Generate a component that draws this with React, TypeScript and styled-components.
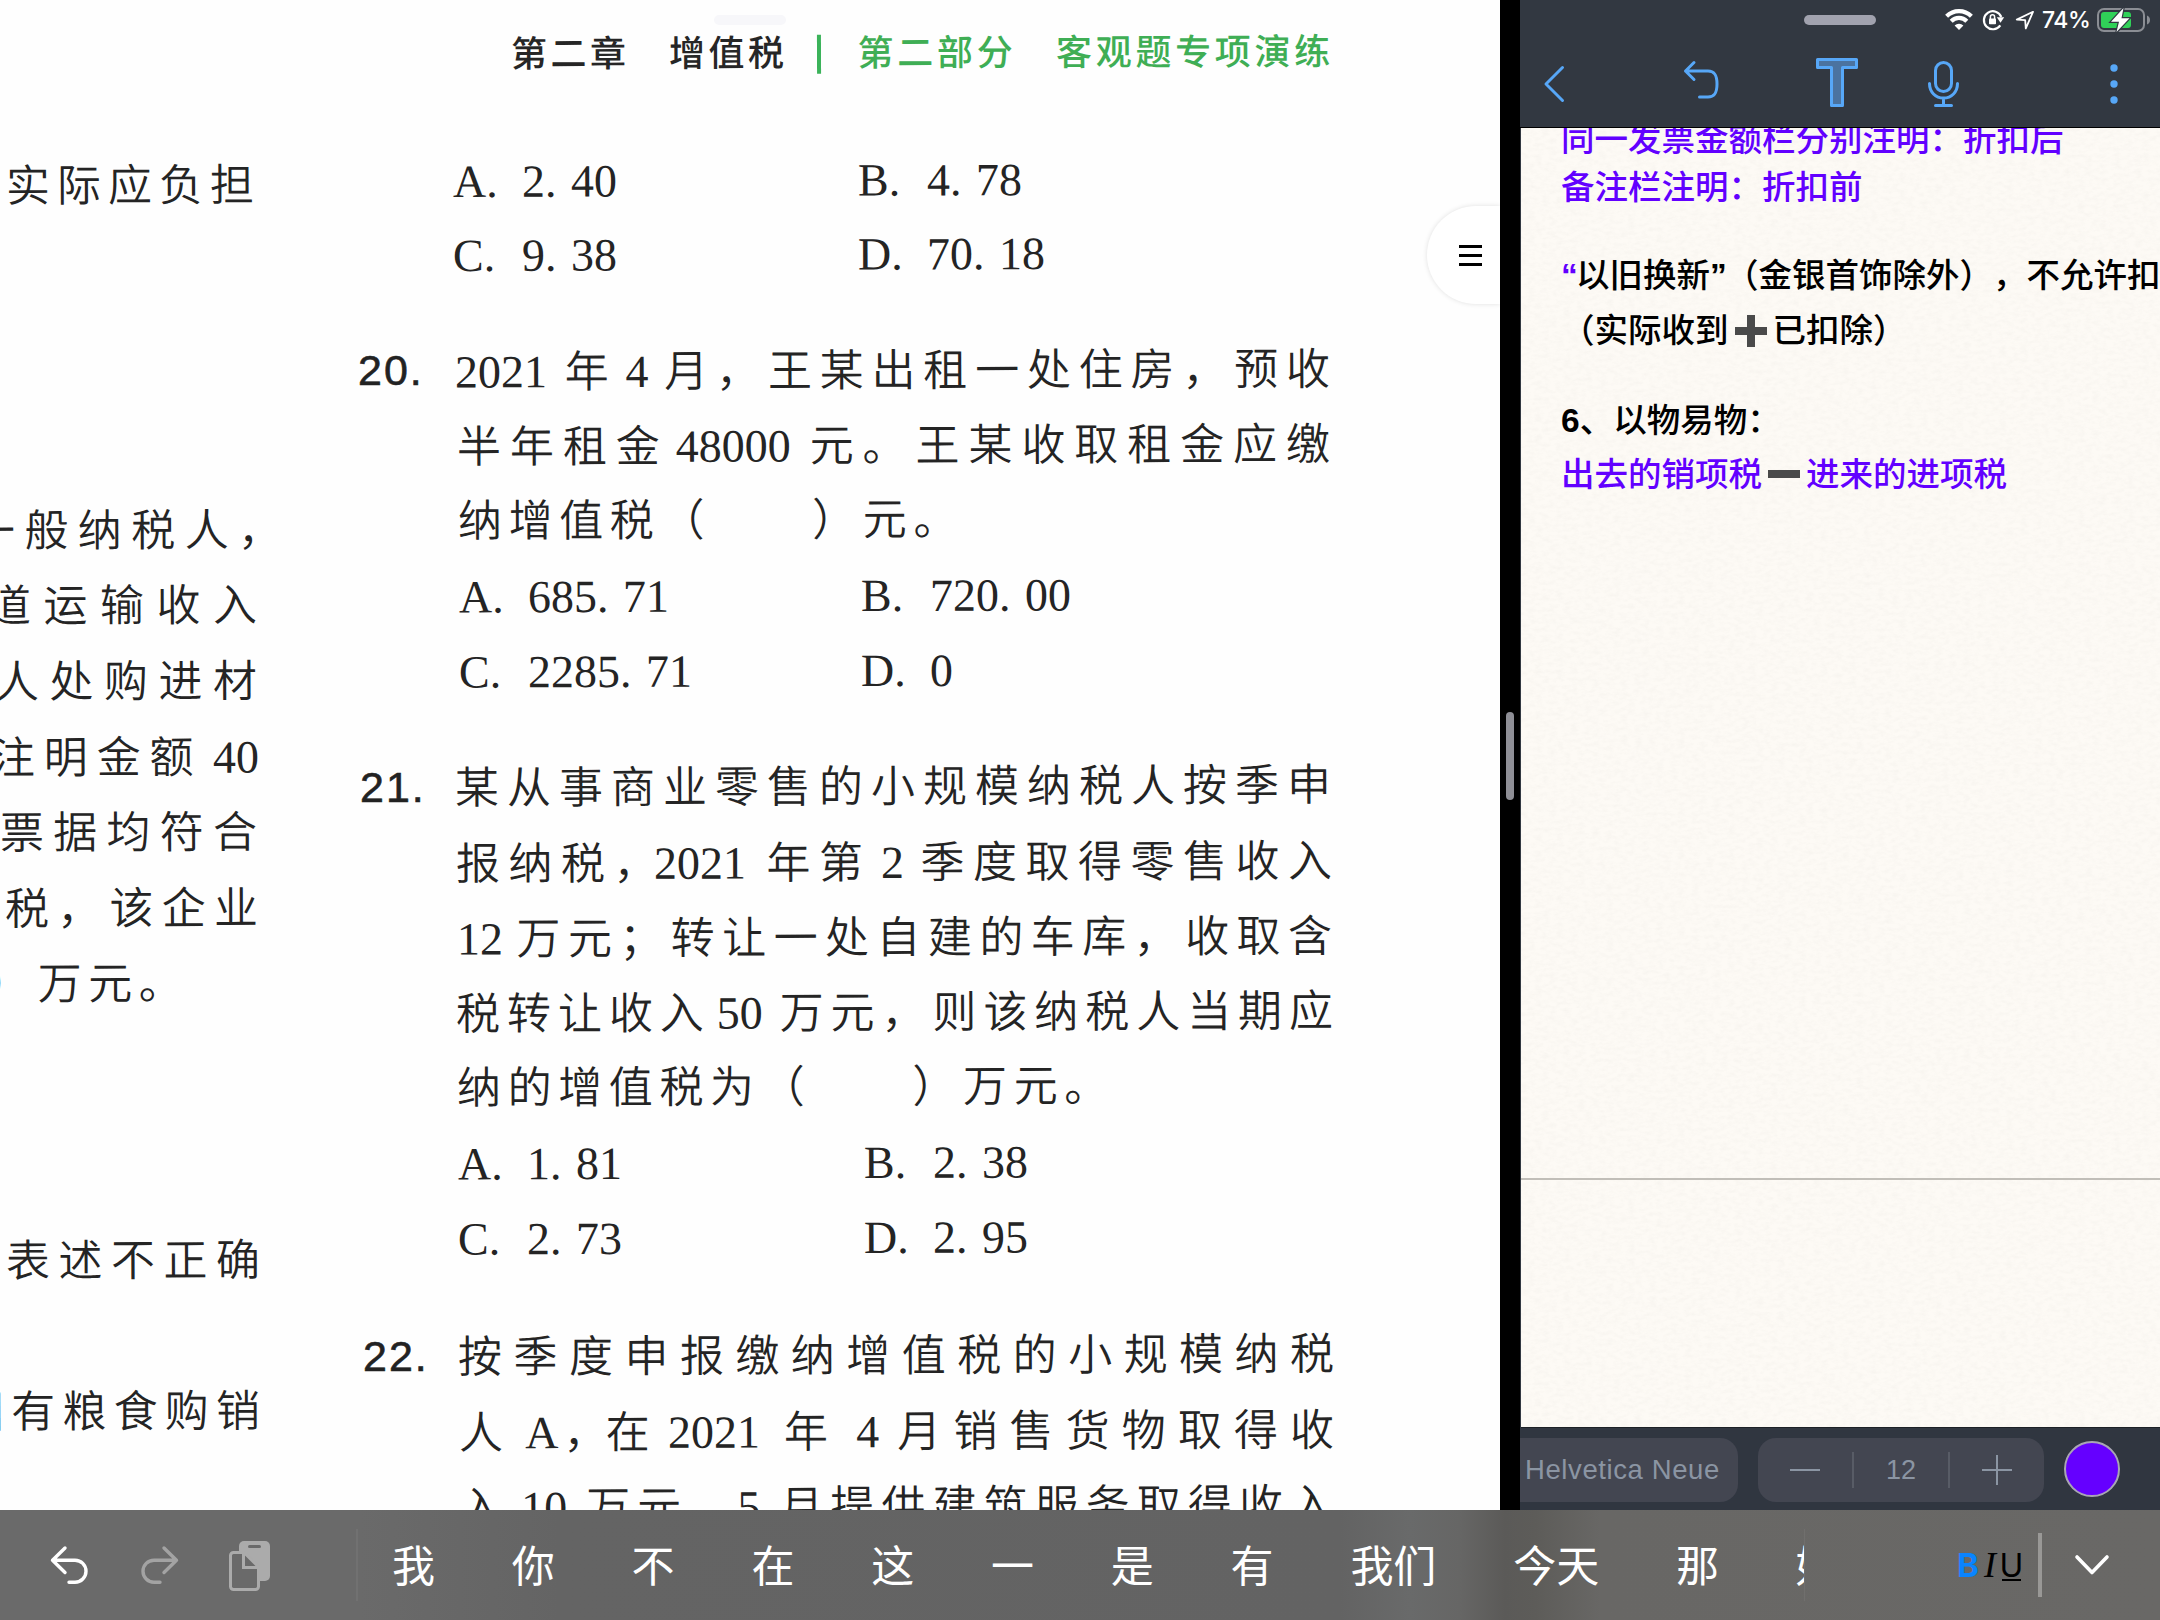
import React from "react";
import styled, { createGlobalStyle, css } from "styled-components";

const GlobalStyle = createGlobalStyle`
  html, body { margin: 0; padding: 0; background: #000; }
  body { overflow: hidden; text-spacing-trim: space-all; }
  * { box-sizing: border-box; }
`;

const serif = `"Liberation Serif", "Noto Sans CJK SC", serif`;
const sans = `"Liberation Sans", "Noto Sans CJK SC", sans-serif`;

const Screen = styled.div`
  width: 2160px;
  height: 1620px;
  display: flex;
  flex-direction: column;
  overflow: hidden;
`;

const Split = styled.div`
  display: flex;
  height: 1510px;
  flex: none;
`;

/* ---------- scanned book page ---------- */

const Book = styled.main`
  position: relative;
  width: 1500px;
  height: 1510px;
  overflow: hidden;
  background: #fefefe;
  color: #242424;
  font-family: ${serif};
`;

const Grabber = styled.div<{ $left: number; $color: string }>`
  position: absolute;
  top: 15px;
  left: ${(p) => p.$left}px;
  width: 72px;
  height: 10px;
  border-radius: 5px;
  background: ${(p) => p.$color};
`;

const RunningHead = styled.header`
  display: flex;
  align-items: center;
  height: 106px;
  padding: 2px 0 0 511px;
  font: 500 36px/50px ${sans};
  white-space: nowrap;
  transform: rotate(-0.15deg);
`;

const Chapter = styled.span`
  letter-spacing: 3.5px;
  color: #262626;
`;

const HeadRule = styled.i`
  width: 4px;
  height: 39px;
  margin: 0 37px 0 29px;
  background: #3bb35a;
`;

const Part = styled.span`
  letter-spacing: 3.7px;
  color: #3fae55;
`;

const Columns = styled.div`
  display: flex;
`;

const PrevColumn = styled.section`
  width: 358px;
  flex: none;
  padding-top: 43px;
  line-height: 75.6px;
`;

const Column = styled.section`
  padding-top: 38px;
  line-height: 75px;
`;

const Block = styled.div<{ $gap?: number }>`
  display: flex;
  margin-top: ${(p) => p.$gap ?? 0}px;
`;

const QuestionNumber = styled.span<{ $indent?: number }>`
  width: 96px;
  flex: none;
  padding-left: ${(p) => p.$indent ?? 0}px;
  font-family: ${sans};
  font-size: 43px;
  letter-spacing: 2px;
  color: #222;
  -webkit-text-stroke: 0.6px #222;
`;

const Lines = styled.div`
  display: flex;
  flex-direction: column;
`;

const Line = styled.p<{ $indent: number; $width?: number }>`
  margin: 0 0 0 ${(p) => p.$indent}px;
  height: 1lh;
  font-size: 44px;
  font-weight: 350;
  white-space: nowrap;
  word-spacing: -9px;
  transform: rotate(-0.2deg);
  ${(p) =>
    p.$width
      ? css`
          width: ${p.$width}px;
          text-align: justify;
          text-align-last: justify;
        `
      : css`
          letter-spacing: 6.6px;
        `}
`;

const Num = styled.span<{ $l?: number; $r?: number }>`
  margin: 0 ${(p) => p.$r ?? 6}px 0 ${(p) => p.$l ?? -1}px;
  font-size: 46px;
  font-weight: 400;
`;

const OptionRow = styled.div<{ $indent: number; $split: number }>`
  display: grid;
  grid-template-columns: ${(p) => p.$split}px auto;
  margin-left: ${(p) => p.$indent}px;
  transform: rotate(-0.2deg);
`;

const OptionCell = styled.div`
  display: grid;
  grid-template-columns: 69px auto;
  justify-content: start;
  height: 1lh;
  font-size: 46px;
  word-spacing: 3px;
  white-space: nowrap;
`;

const OptionList = styled.div<{ $pitch?: number }>`
  line-height: ${(p) => p.$pitch ?? 75}px;
`;

const MenuTab = styled.button`
  position: absolute;
  top: 206px;
  right: 0;
  width: 73px;
  height: 98px;
  padding: 0 18px 0 0;
  border: 0;
  border-radius: 49px 0 0 49px;
  background: #fff;
  box-shadow: 0 0 5px rgba(0, 0, 0, 0.12);
  display: flex;
  flex-direction: column;
  align-items: flex-end;
  justify-content: center;
  gap: 6px;
`;

const MenuBar = styled.i`
  width: 23px;
  height: 3px;
  background: #000;
`;

/* ---------- split divider ---------- */

const Divider = styled.div`
  width: 20px;
  flex: none;
  background: #000;
  display: flex;
  justify-content: center;
  padding-top: 712px;
`;

const DividerHandle = styled.i`
  width: 8px;
  height: 88px;
  border-radius: 4px;
  background: #8e8e95;
`;

/* ---------- notes app ---------- */

const Notes = styled.aside`
  position: relative;
  width: 640px;
  display: flex;
  flex-direction: column;
  background: #323841;
`;

const StatusBar = styled.div`
  display: flex;
  align-items: center;
  justify-content: flex-end;
  height: 40px;
  padding-right: 9px;
  color: #fff;
  font: 400 24px/40px Inter, ${sans};
`;

const Percent = styled.span`
  width: 50px;
  margin: 0 5px 0 7px;
  letter-spacing: -0.5px;
  font-size: 23px;
  font-weight: 500;
`;

const Toolbar = styled.nav`
  display: flex;
  align-items: center;
  height: 88px;
  padding-left: 24px;
  border-bottom: 1px solid #000;
  color: #57a7f7;
`;

const ToolIcon = styled.svg<{ $ml?: number; $mt?: number }>`
  display: block;
  flex: none;
  margin-left: ${(p) => p.$ml ?? 0}px;
  margin-top: ${(p) => p.$mt ?? 0}px;
  overflow: visible;
`;

const Paper = styled.article`
  position: relative;
  height: 1300px;
  margin-left: 1px;
  overflow: hidden;
  background: #fdfaf5;
  border-bottom: 1px solid #1d2126;
`;

const Grain = styled.svg`
  position: absolute;
  inset: 0;
  width: 100%;
  height: 100%;
`;

const NoteBody = styled.div`
  position: relative;
  display: flow-root;
  height: 1052px;
  padding-left: 40px;
  border-bottom: 2px solid #c1beb8;
  font: 500 33.5px/48px ${sans};
  color: #000;
`;

const NoteLine = styled.p<{ $gap: number; $accent?: boolean }>`
  display: flex;
  align-items: center;
  height: 48px;
  margin: ${(p) => p.$gap}px 0 0;
  white-space: nowrap;
  color: ${(p) => (p.$accent ? "#6200ff" : "#000")};
`;

const Quote = styled.span<{ $accent?: boolean }>`
  width: 15px;
  font-weight: 700;
  color: ${(p) => (p.$accent ? "#6200ff" : "inherit")};
`;

const Bold = styled.b`
  font-weight: 700;
`;

const OperatorIcon = styled.svg`
  width: 32px;
  height: 32px;
  margin: 0 6px;
`;

const FormatBar = styled.div`
  display: flex;
  align-items: center;
  height: 82px;
  padding-top: 1px;
  background: #303640;
  color: #8b95a3;
  font: 400 27px/64px ${sans};
`;

const FontName = styled.div`
  width: 218px;
  height: 64px;
  padding-left: 5px;
  border-radius: 0 18px 18px 0;
  background: #434651;
  white-space: nowrap;
  letter-spacing: 0.6px;
  font-size: 27.5px;
`;

const Stepper = styled.div`
  display: grid;
  grid-template-columns: 94px 2px 94px 2px 94px;
  place-items: center;
  width: 286px;
  height: 64px;
  margin-left: 20px;
  border-radius: 18px;
  background: #434651;
`;

const StepRule = styled.i`
  width: 2px;
  height: 36px;
  background: #585c66;
`;

const Swatch = styled.i`
  width: 56px;
  height: 56px;
  margin: -2px 0 0 20px;
  border: 2px solid #a9a5b5;
  border-radius: 50%;
  background: #6500ff;
`;

/* ---------- keyboard suggestion bar ---------- */

const KeyboardBar = styled.footer`
  display: flex;
  align-items: center;
  height: 110px;
  flex: none;
  background: linear-gradient(
    90deg,
    #6a6a6a 0,
    #6a6a6a 360px,
    #646464 560px,
    #636363 1340px,
    #696a6a 1410px,
    #666665 1460px,
    #5b5a58 1505px,
    #5d5c59 1535px,
    #686765 1600px,
    #696866 2160px
  );
`;

const EditTools = styled.div`
  display: flex;
  align-items: center;
  width: 358px;
  height: 72px;
  flex: none;
  padding-left: 50px;
  border-right: 2px solid #717171;
`;

const Candidates = styled.div`
  display: flex;
  align-items: center;
  width: 1447px;
  height: 72px;
  flex: none;
  padding-left: 34px;
  overflow: hidden;
  border-right: 1px solid #706f6d;
  color: #fff;
  font: 400 43px/69px "Noto Sans CJK SC", sans-serif;
  white-space: nowrap;
`;

const Candidate = styled.span`
  flex: none;
  height: 72px;
  padding-right: 76.8px;
`;

const TextStyles = styled.div`
  display: flex;
  align-items: baseline;
  margin-left: 152px;
  width: 81px;
  color: #000;
  font-size: 34px;
  line-height: 44px;
`;

const BoldMark = styled.b`
  width: 25px;
  color: #0a84ff;
  font-family: Inter, ${sans};
  font-size: 33px;
`;

const ItalicMark = styled.i`
  width: 20px;
  padding-left: 2px;
  font-family: ${serif};
  font-size: 36px;
`;

const UnderlineMark = styled.span`
  width: 19px;
  height: 31px;
  line-height: 31px;
  display: flex;
  justify-content: center;
  border-bottom: 2px solid #000;
  font-family: Inter, ${sans};
  font-size: 32px;
`;

const BarRule = styled.i`
  width: 4px;
  height: 64px;
  background: #999896;
`;

type Row = [string, string, string, string];

const Options = ({ rows, indent, split, pitch }: { rows: Row[]; indent: number; split: number; pitch?: number }) => (
  <OptionList $pitch={pitch}>
    {rows.map(([k1, v1, k2, v2]) => (
      <OptionRow key={k1} $indent={indent} $split={split}>
        <OptionCell>
          <span>{k1}.</span>
          <span>{v1}</span>
        </OptionCell>
        <OptionCell>
          <span>{k2}.</span>
          <span>{v2}</span>
        </OptionCell>
      </OptionRow>
    ))}
  </OptionList>
);

const BookPage = () => (
  <Book>
    <Grabber $left={714} $color="#f7f7fa" />
    <RunningHead>
      <Chapter>第二章　增值税</Chapter>
      <HeadRule />
      <Part>第二部分　客观题专项演练</Part>
    </RunningHead>
    <Columns>
      <PrevColumn>
        <Line $indent={6} $width={248}>实际应负担</Line>
        <Block $gap={269}>
          <Lines>
            <Line $indent={-29} $width={311}>一般纳税人，</Line>
            <Line $indent={-13} $width={270}>道运输收入</Line>
            <Line $indent={-5} $width={262}>人处购进材</Line>
            <Line $indent={-9} $width={268}>注明金额 <Num $l={0} $r={0}>40</Num></Line>
            <Line $indent={0} $width={257}>票据均符合</Line>
            <Line $indent={5} $width={253}>税，该企业</Line>
            <Line $indent={-13}>）万元。</Line>
          </Lines>
        </Block>
        <Block $gap={201}>
          <Line $indent={6} $width={254}>表述不正确</Line>
        </Block>
        <Block $gap={76}>
          <Line $indent={-40} $width={300}>国有粮食购销</Line>
        </Block>
      </PrevColumn>
      <Column>
        <Block>
          <QuestionNumber />
          <Lines>
            <Options rows={[["A", "2. 40", "B", "4. 78"], ["C", "9. 38", "D", "70. 18"]]} indent={-1} split={405} pitch={74} />
          </Lines>
        </Block>
        <Block $gap={41}>
          <QuestionNumber>20.</QuestionNumber>
          <Lines>
            <Line $indent={1} $width={875}>
              <Num $l={0} $r={8}>2021</Num> 年 <Num>4</Num> 月，王某出租一处住房，预收
            </Line>
            <Line $indent={3} $width={873}>
              半年租金 <Num $l={-4} $r={8}>48000</Num> 元。王某收取租金应缴
            </Line>
            <Line $indent={4}>纳增值税（　　）元。</Line>
            <Options rows={[["A", "685. 71", "B", "720. 00"], ["C", "2285. 71", "D", "0"]]} indent={5} split={402} />
          </Lines>
        </Block>
        <Block $gap={42}>
          <QuestionNumber $indent={2}>21.</QuestionNumber>
          <Lines>
            <Line $indent={1} $width={876}>某从事商业零售的小规模纳税人按季申</Line>
            <Line $indent={2} $width={876}>
              报纳税，<Num $l={-12} $r={10}>2021</Num> 年第 <Num>2</Num> 季度取得零售收入
            </Line>
            <Line $indent={3} $width={875}>
              <Num $l={0} $r={4}>12</Num> 万元；转让一处自建的车库，收取含
            </Line>
            <Line $indent={2} $width={877}>
              税转让收入 <Num $l={-3} $r={8}>50</Num> 万元，则该纳税人当期应
            </Line>
            <Line $indent={3}>纳的增值税为（　　）万元。</Line>
            <Options rows={[["A", "1. 81", "B", "2. 38"], ["C", "2. 73", "D", "2. 95"]]} indent={4} split={406} />
          </Lines>
        </Block>
        <Block $gap={44}>
          <QuestionNumber $indent={5}>22.</QuestionNumber>
          <Lines>
            <Line $indent={4} $width={876}>按季度申报缴纳增值税的小规模纳税</Line>
            <Line $indent={5} $width={875}>
              人 <Num $l={-4} $r={-7}>A</Num>，<Num $l={-14} $r={0} />在 <Num $l={-8} $r={10}>2021</Num> 年 <Num $l={2} $r={4}>4</Num> 月销售货物取得收
            </Line>
            <Line $indent={5} $width={875}>
              入 <Num $l={2} $r={10}>10</Num> 万元，<Num $l={-2} $r={10}>5</Num> 月提供建筑服务取得收入
            </Line>
          </Lines>
        </Block>
      </Column>
    </Columns>
    <MenuTab>
      <MenuBar />
      <MenuBar />
      <MenuBar />
    </MenuTab>
  </Book>
);

const NotesPane = () => (
  <Notes>
    <Grabber $left={284} $color="#a1a2ae" />
    <StatusBar>
      <ToolIcon width="28" height="22" viewBox="0 0 28 22" fill="none" stroke="#fff" strokeWidth="4.2">
        <path d="M1.6 7.2a17.6 17.6 0 0 1 24.8 0" />
        <path d="M6.2 12.2a11 11 0 0 1 15.6 0" />
        <path d="M9.6 16.6a6.3 6.3 0 0 1 8.8 0L14 21z" fill="#fff" stroke="none" />
      </ToolIcon>
      <ToolIcon $ml={9} width="24" height="22" viewBox="0 0 24 22" fill="none" stroke="#fff" strokeWidth="2.2">
        <path d="M18.3 16.4A9 9 0 1 1 19.3 8" />
        <path d="M14.8 8.3h7.4l-3.7 5.4z" fill="#fff" stroke="none" />
        <rect x="7" y="9.6" width="7" height="5.6" rx="0.8" fill="#fff" stroke="none" />
        <path d="M8.4 10V7.9a2.1 2.1 0 0 1 4.2 0V10" strokeWidth="1.5" />
      </ToolIcon>
      <ToolIcon $ml={9} width="20" height="20" viewBox="0 0 20 20" fill="none" stroke="#fff" strokeWidth="1.8" strokeLinejoin="round">
        <path d="M18 1.8 1.8 9.6l8.4.6.6 8.2z" />
      </ToolIcon>
      <Percent>74%</Percent>
      <ToolIcon width="54" height="24" viewBox="0 0 54 24">
        <rect x="1" y="1" width="46" height="22" rx="6" fill="none" stroke="#8b8e94" strokeWidth="2" />
        <path d="M50 7.500c4 1.500 4 7.500 0 9z" fill="#8b8e94" />
        <rect x="4" y="4" width="30" height="16" rx="3" fill="#30d158" />
        <path
          d="M26.500 0 14 13.800h8L19.500 24 32.500 10.200h-8z"
          fill="#fff"
          stroke="#323841"
          strokeWidth="2.400"
          paintOrder="stroke"
        />
      </ToolIcon>
    </StatusBar>
    <Toolbar>
      <ToolIcon width="20" height="36" viewBox="0 0 20 36" fill="none" stroke="currentColor" strokeWidth="3" strokeLinecap="round" strokeLinejoin="round">
        <path d="M18.500 1.500 2 18l16.500 16.500" />
      </ToolIcon>
      <ToolIcon $ml={120} $mt={-7} width="36" height="38" viewBox="0 0 36 38" fill="none" stroke="currentColor" strokeWidth="3" strokeLinecap="round" strokeLinejoin="round">
        <path d="M10 1.500 1.500 10l8.500 8.500M1.500 10H24c6 0 9 3.500 9 13s-3 13-9 13h-8.500" />
      </ToolIcon>
      <ToolIcon $ml={96} $mt={-3} width="42" height="49" viewBox="0 0 42 49" fill="#4b73a0" stroke="currentColor" strokeWidth="3" strokeLinejoin="round">
        <path d="M1.500 1.500h39v8H26.500v38h-11v-38h-14z" />
      </ToolIcon>
      <ToolIcon $ml={70} $mt={1} width="31" height="46" viewBox="0 0 31 46" fill="none" stroke="currentColor" strokeWidth="3" strokeLinecap="round">
        <rect x="7.500" y="1.500" width="16" height="29" rx="8" />
        <path d="M1.500 22.500C1.500 31 7.500 37 15.500 37s14-6 14-14.500M15.500 37v7.500M7.500 44.500h16" />
      </ToolIcon>
      <ToolIcon $ml={151} width="8" height="40" viewBox="0 0 8 40" fill="currentColor">
        <circle cx="4" cy="4" r="3.700" />
        <circle cx="4" cy="20" r="3.700" />
        <circle cx="4" cy="36" r="3.700" />
      </ToolIcon>
    </Toolbar>
    <Paper>
      <Grain>
        <filter id="grain">
          <feTurbulence type="fractalNoise" baseFrequency="0.14 0.26" numOctaves="3" seed="4" />
          <feColorMatrix values="0 0 0 0 0.55  0 0 0 0 0.54  0 0 0 0 0.5  0.5 0 0 0 -0.19" />
        </filter>
        <rect width="100%" height="100%" filter="url(#grain)" opacity="0.36" />
      </Grain>
      <NoteBody>
        <NoteLine $gap={-12} $accent>同一发票金额栏分别注明：折扣后</NoteLine>
        <NoteLine $gap={0} $accent>备注栏注明：折扣前</NoteLine>
        <NoteLine $gap={40}>
          <Quote $accent>“</Quote>以旧换新<Quote>”</Quote>（金银首饰除外），不允许扣
        </NoteLine>
        <NoteLine $gap={7}>
          （实际收到
          <OperatorIcon viewBox="0 0 32 32">
            <path d="M12 0h8v12h12v8H20v12h-8V20H0v-8h12z" fill="#4a4a4a" />
          </OperatorIcon>
          已扣除）
        </NoteLine>
        <NoteLine $gap={42}>
          <Bold>6</Bold>、以物易物：
        </NoteLine>
        <NoteLine $gap={6} $accent>
          出去的销项税
          <OperatorIcon viewBox="0 0 32 32">
            <path d="M0 11h32v8H0z" fill="#4a4a4a" />
          </OperatorIcon>
          进来的进项税
        </NoteLine>
      </NoteBody>
    </Paper>
    <FormatBar>
      <FontName>Helvetica Neue</FontName>
      <Stepper>
        <svg width="30" height="30" stroke="currentColor" strokeWidth="2">
          <path d="M0 15h30" />
        </svg>
        <StepRule />
        <span>12</span>
        <StepRule />
        <svg width="30" height="30" stroke="currentColor" strokeWidth="2">
          <path d="M0 15h30M15 0v30" />
        </svg>
      </Stepper>
      <Swatch />
    </FormatBar>
  </Notes>
);

const words = ["我", "你", "不", "在", "这", "一", "是", "有", "我们", "今天", "那", "好"];

const Keyboard = () => (
  <KeyboardBar>
    <EditTools>
      <ToolIcon width="38" height="38" viewBox="0 0 38 38" fill="none" stroke="#fff" strokeWidth="3.400" strokeLinecap="round" strokeLinejoin="round">
        <path d="M15 2 2.500 14.200 15 26.500M2.500 14.200H25a11 11 0 0 1 0 22h-6" />
      </ToolIcon>
      <ToolIcon $ml={53} width="38" height="38" viewBox="0 0 38 38" fill="none" stroke="#a3a3a3" strokeWidth="3.400" strokeLinecap="round" strokeLinejoin="round">
        <path d="M23 2l12.500 12.200L23 26.500M35.500 14.200H13a11 11 0 0 0 0 22h6" />
      </ToolIcon>
      <ToolIcon $ml={50} $mt={2} width="41" height="50" viewBox="0 0 41 50">
        <rect x="10" y="0" width="31" height="40" rx="5" fill="#ababab" />
        <rect x="19" y="4" width="13" height="3" rx="1.500" fill="#6a6a6a" />
        <path d="M1.500 14.500a3 3 0 0 1 3-3H15L29.500 26v19.500a3 3 0 0 1-3 3h-22a3 3 0 0 1-3-3z" fill="#6a6a6a" stroke="#ababab" strokeWidth="3" />
        <path d="M14.500 11.500v15h15" fill="none" stroke="#ababab" strokeWidth="3" />
      </ToolIcon>
    </EditTools>
    <Candidates>
      {words.map((w) => (
        <Candidate key={w}>{w}</Candidate>
      ))}
    </Candidates>
    <TextStyles>
      <BoldMark>B</BoldMark>
      <ItalicMark>I</ItalicMark>
      <UnderlineMark>U</UnderlineMark>
    </TextStyles>
    <BarRule />
    <ToolIcon $ml={33} width="34" height="20" viewBox="0 0 34 20" fill="none" stroke="#fff" strokeWidth="3.600" strokeLinecap="round" strokeLinejoin="round">
      <path d="M2 2l15 15.500L32 2" />
    </ToolIcon>
  </KeyboardBar>
);

export default function App() {
  return (
    <Screen>
      <GlobalStyle />
      <Split>
        <BookPage />
        <Divider>
          <DividerHandle />
        </Divider>
        <NotesPane />
      </Split>
      <Keyboard />
    </Screen>
  );
}
